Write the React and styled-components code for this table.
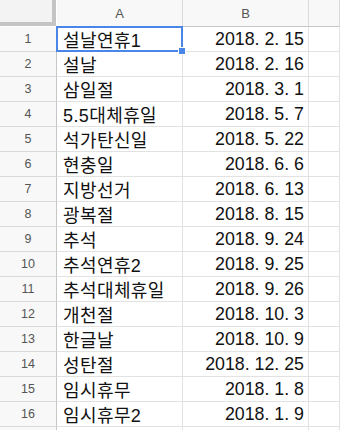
import React from 'react';
import styled, { createGlobalStyle } from 'styled-components';

const GlobalStyle = createGlobalStyle`
    body {
        margin: 0;
        background: white;
        font-family: "Liberation Sans", "Noto Sans CJK KR", sans-serif;
    }
`

const Sheet = styled.div`
    position: relative;
    display: grid;
    grid-template-columns: 57px 126px 126px 1fr;
    grid-auto-rows: 25px;
    grid-template-rows: 27px;
    width: 340px;
    height: 430px;
    overflow: hidden;
`

const Corner = styled.div`
    background: #f3f3f3;
    border-right: 4px solid #c4c4c4;
    border-bottom: 4px solid #c4c4c4;
    box-sizing: border-box;
    width: 56px;
    height: 26px;
`

const ColHeader = styled.div`
    background: #f8f8f8;
    border-right: 1px solid #dadada;
    border-bottom: 1px solid #c6c6c6;
    box-sizing: border-box;
    display: flex;
    align-items: center;
    justify-content: center;
    color: #555;
    font-size: 13px;
`

const RowHeader = styled.div`
    background: #f8f8f8;
    border-right: 1px solid #c6c6c6;
    border-bottom: 1px solid #dadada;
    box-sizing: border-box;
    display: flex;
    align-items: center;
    justify-content: center;
    color: #555;
    font-size: 12.5px;
`

const Cell = styled.div`
    border-right: 1px solid #e2e2e2;
    border-bottom: 1px solid #e2e2e2;
    box-sizing: border-box;
    display: flex;
    align-items: center;
    justify-content: ${p => p.$right ? 'flex-end' : 'flex-start'};
    padding: 0 4px 0 6px;
    color: #111;
    font-size: ${p => p.$right ? '17.8px' : '18px'};
    letter-spacing: ${p => p.$right ? '0' : '0.4px'};
    white-space: nowrap;
    overflow: hidden;
`

const Selection = styled.div`
    position: absolute;
    left: 56px;
    top: 26px;
    width: 127px;
    height: 26px;
    border: 2px solid #4a86e8;
    box-sizing: border-box;
    pointer-events: none;
`

const Handle = styled.div`
    position: absolute;
    right: -5px;
    bottom: -5px;
    width: 8px;
    height: 8px;
    background: #4a86e8;
    border: 1px solid white;
    box-sizing: border-box;
`

const rows = [
    ['설날연휴1', '2018. 2. 15'],
    ['설날', '2018. 2. 16'],
    ['삼일절', '2018. 3. 1'],
    ['5.5대체휴일', '2018. 5. 7'],
    ['석가탄신일', '2018. 5. 22'],
    ['현충일', '2018. 6. 6'],
    ['지방선거', '2018. 6. 13'],
    ['광복절', '2018. 8. 15'],
    ['추석', '2018. 9. 24'],
    ['추석연휴2', '2018. 9. 25'],
    ['추석대체휴일', '2018. 9. 26'],
    ['개천절', '2018. 10. 3'],
    ['한글날', '2018. 10. 9'],
    ['성탄절', '2018. 12. 25'],
    ['임시휴무', '2018. 1. 8'],
    ['임시휴무2', '2018. 1. 9'],
    ['', ''],
]

function App(){
    return(
        <>
            <GlobalStyle/>
            <Sheet>
                <Corner/>
                <ColHeader>A</ColHeader>
                <ColHeader>B</ColHeader>
                <ColHeader/>
                {rows.map((r, i) => (
                    <React.Fragment key={i}>
                        <RowHeader>{r[0] ? i + 1 : ''}</RowHeader>
                        <Cell>{r[0]}</Cell>
                        <Cell $right>{r[1]}</Cell>
                        <Cell/>
                    </React.Fragment>
                ))}
                <Selection>
                    <Handle/>
                </Selection>
            </Sheet>
        </>
    );
}
export default App;
